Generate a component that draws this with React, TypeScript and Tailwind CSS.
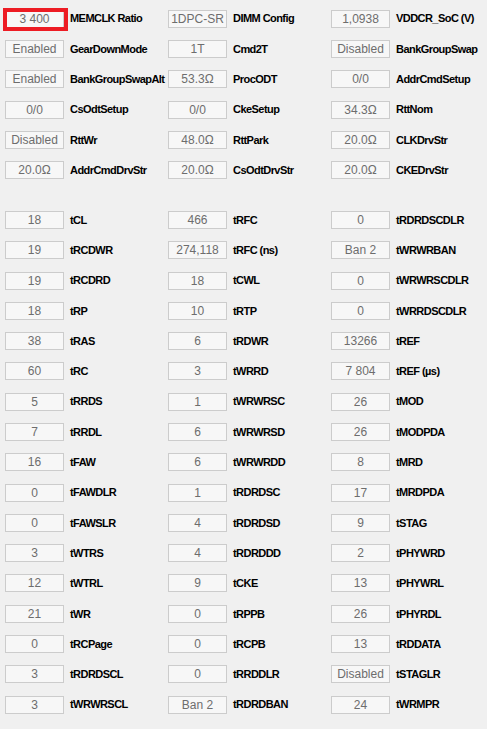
import React from "react";

type Cell = [string, string];

const top: Cell[][] = [
  [["3 400", "MEMCLK Ratio"], ["1DPC-SR", "DIMM Config"], ["1,0938", "VDDCR_SoC (V)"]],
  [["Enabled", "GearDownMode"], ["1T", "Cmd2T"], ["Disabled", "BankGroupSwap"]],
  [["Enabled", "BankGroupSwapAlt"], ["53.3Ω", "ProcODT"], ["0/0", "AddrCmdSetup"]],
  [["0/0", "CsOdtSetup"], ["0/0", "CkeSetup"], ["34.3Ω", "RttNom"]],
  [["Disabled", "RttWr"], ["48.0Ω", "RttPark"], ["20.0Ω", "CLKDrvStr"]],
  [["20.0Ω", "AddrCmdDrvStr"], ["20.0Ω", "CsOdtDrvStr"], ["20.0Ω", "CKEDrvStr"]],
];

const timings: Cell[][] = [
  [["18", "tCL"], ["466", "tRFC"], ["0", "tRDRDSCDLR"]],
  [["19", "tRCDWR"], ["274,118", "tRFC (ns)"], ["Ban 2", "tWRWRBAN"]],
  [["19", "tRCDRD"], ["18", "tCWL"], ["0", "tWRWRSCDLR"]],
  [["18", "tRP"], ["10", "tRTP"], ["0", "tWRRDSCDLR"]],
  [["38", "tRAS"], ["6", "tRDWR"], ["13266", "tREF"]],
  [["60", "tRC"], ["3", "tWRRD"], ["7 804", "tREF (µs)"]],
  [["5", "tRRDS"], ["1", "tWRWRSC"], ["26", "tMOD"]],
  [["7", "tRRDL"], ["6", "tWRWRSD"], ["26", "tMODPDA"]],
  [["16", "tFAW"], ["6", "tWRWRDD"], ["8", "tMRD"]],
  [["0", "tFAWDLR"], ["1", "tRDRDSC"], ["17", "tMRDPDA"]],
  [["0", "tFAWSLR"], ["4", "tRDRDSD"], ["9", "tSTAG"]],
  [["3", "tWTRS"], ["4", "tRDRDDD"], ["2", "tPHYWRD"]],
  [["12", "tWTRL"], ["9", "tCKE"], ["13", "tPHYWRL"]],
  [["21", "tWR"], ["0", "tRPPB"], ["26", "tPHYRDL"]],
  [["0", "tRCPage"], ["0", "tRCPB"], ["13", "tRDDATA"]],
  [["3", "tRDRDSCL"], ["0", "tRRDDLR"], ["Disabled", "tSTAGLR"]],
  [["3", "tWRWRSCL"], ["Ban 2", "tRDRDBAN"], ["24", "tWRMPR"]],
];

function Field({ value, label, marked }: { value: string; label: string; marked?: boolean }) {
  return (
    <div className="flex items-center">
      <div className="relative">
        <div className="w-[59px] h-[18px] border border-[#cccccc] bg-[#f7f7f7] flex items-center justify-center text-[12px] leading-none text-[#6d6d6d]">
          {value}
        </div>
        {marked && (
          <div className="absolute left-[-2px] top-[-2px] w-[65px] h-[23px] border-[4px] border-[#ed1c24]" />
        )}
      </div>
      <span className="ml-[6px] text-[11px] font-bold tracking-[-0.55px] text-black whitespace-nowrap">
        {label}
      </span>
    </div>
  );
}

function Rows({ rows, markFirst }: { rows: Cell[][]; markFirst?: boolean }) {
  return (
    <div className="flex flex-col">
      {rows.map((row, i) => (
        <div key={i} className="grid grid-cols-[163px_163px_163px] h-[30.3px] items-center">
          {row.map(([v, l], j) => (
            <Field key={l} value={v} label={l} marked={markFirst && i === 0 && j === 0} />
          ))}
        </div>
      ))}
    </div>
  );
}

export default function App() {
  return (
    <div
      className="min-h-screen w-[487px] bg-[#f0f0f0] pl-[5px] pt-[3.5px]"
      style={{ fontFamily: '"Liberation Sans", Arial, sans-serif' }}
    >
      <Rows rows={top} markFirst />
      <div className="h-[19.5px]" />
      <Rows rows={timings} />
    </div>
  );
}
